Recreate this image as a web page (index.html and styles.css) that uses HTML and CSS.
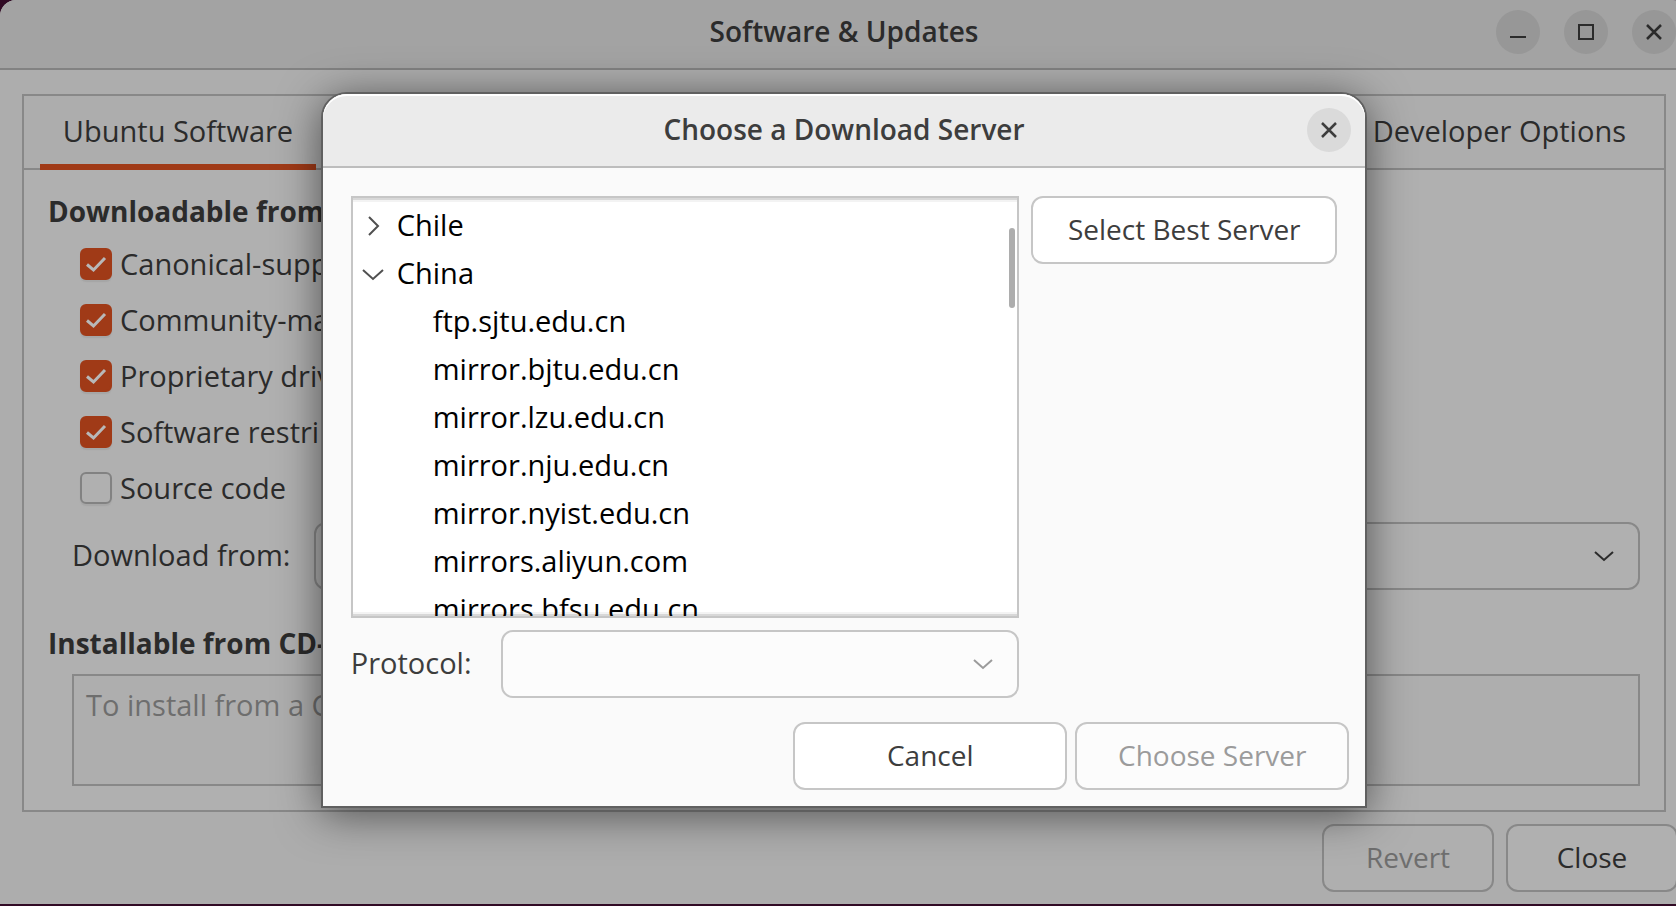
FILE: index.html
```html
<!DOCTYPE html>
<html lang="en">
<head>
<meta charset="utf-8">
<title>Software &amp; Updates</title>
<link rel="stylesheet" href="styles.css">
</head>
<body>
<main class="window">
  <header class="titlebar">
    <h1 class="title">Software &amp; Updates</h1>
    <div class="window-controls">
      <button class="round" type="button" aria-label="Minimize"><svg width="16" height="16" viewBox="0 0 16 16"><path d="M0 13H16" /></svg></button>
      <button class="round" type="button" aria-label="Maximize"><svg width="16" height="16" viewBox="0 0 16 16"><path d="M1 1H15V15H1Z" /></svg></button>
      <button class="round" type="button" aria-label="Close window"><svg class="cross" width="16" height="16" viewBox="0 0 16 16"><path d="M1 1L15 15M15 1L1 15" /></svg></button>
    </div>
  </header>

  <section class="notebook">
    <nav class="tabs">
      <button class="tab tab-active" type="button">Ubuntu Software</button>
      <button class="tab" type="button">Developer Options</button>
    </nav>
    <div class="page">
      <h2 class="heading">Downloadable from</h2>
      <div class="checks">
        <label class="check"><input type="checkbox" checked>Canonical-supp</label>
        <label class="check"><input type="checkbox" checked>Community-ma</label>
        <label class="check"><input type="checkbox" checked>Proprietary driv</label>
        <label class="check"><input type="checkbox" checked>Software restri</label>
        <label class="check"><input type="checkbox">Source code</label>
      </div>
      <div class="source">
        <label for="source">Download from:</label>
        <div class="combo">
          <select id="source"><option></option></select>
          <svg class="chevron" width="20" height="12" viewBox="0 0 20 12"><path d="M1 2L10 10L19 2" /></svg>
        </div>
      </div>
      <h2 class="heading">Installable from CD-</h2>
      <div class="media">To install from a C</div>
    </div>
  </section>

  <footer class="actions">
    <button class="button" type="button" disabled>Revert</button>
    <button class="button" type="button">Close</button>
  </footer>

  <div class="overlay">
    <section class="dialog" role="dialog" aria-labelledby="dialog-title">
      <header class="dialog-header">
        <h2 class="title" id="dialog-title">Choose a Download Server</h2>
        <button class="round" type="button" aria-label="Close dialog"><svg class="cross" width="16" height="16" viewBox="0 0 16 16"><path d="M1 1L15 15M15 1L1 15" /></svg></button>
      </header>
      <div class="dialog-body">
        <div class="chooser">
          <div class="list">
            <ul class="tree">
              <li class="row"><svg class="arrow" width="24" height="24" viewBox="0 0 24 24"><path d="M8 4L17 13L8 22" /></svg>Chile</li>
              <li class="row"><svg class="arrow" width="24" height="24" viewBox="0 0 24 24"><path d="M2 9L12 18L22 9" /></svg>China</li>
              <li class="row child">ftp.sjtu.edu.cn</li>
              <li class="row child">mirror.bjtu.edu.cn</li>
              <li class="row child">mirror.lzu.edu.cn</li>
              <li class="row child">mirror.nju.edu.cn</li>
              <li class="row child">mirror.nyist.edu.cn</li>
              <li class="row child">mirrors.aliyun.com</li>
              <li class="row child">mirrors.bfsu.edu.cn</li>
            </ul>
            <div class="thumb"></div>
          </div>
          <div class="protocol">
            <label for="protocol">Protocol:</label>
            <div class="combo">
              <select id="protocol" disabled><option></option></select>
              <svg class="chevron" width="20" height="12" viewBox="0 0 20 12"><path d="M1 2L10 10L19 2" /></svg>
            </div>
          </div>
        </div>
        <button class="button best" type="button">Select Best Server</button>
      </div>
      <footer class="dialog-actions">
        <button class="button" type="button">Cancel</button>
        <button class="button" type="button" disabled>Choose Server</button>
      </footer>
    </section>
  </div>
</main>
</body>
</html>
```

FILE: styles.css
```css
* {
  box-sizing: border-box;
}

body {
  margin: 0;
  min-height: 100vh;
  overflow: hidden;
  background: #300a24;
  font: 29px/36px "Open Sans", "Noto Sans", sans-serif;
  color: #2b2b2b;
}

h1, h2, ul {
  margin: 0;
  padding: 0;
}

button, select {
  font: inherit;
  color: inherit;
}

svg {
  display: block;
  fill: none;
  stroke: currentColor;
  stroke-width: 2;
}

/* The main window runs a little past the right edge of the screen. */
.window {
  position: relative;
  width: calc(100% + 12px);
  min-height: calc(100vh - 2px);
  display: flex;
  flex-direction: column;
  border-radius: 16px 16px 0 0;
  background: #adadad;
}

.titlebar {
  display: grid;
  grid-template-columns: 1fr auto 1fr;
  align-items: center;
  height: 70px;
  padding: 0 12px 4px;
  border-bottom: 2px solid #828282;
  border-radius: 16px 16px 0 0;
  background: #a3a3a3;
}

.title,
.heading {
  font-weight: 600;
  font-size: 28px;
}

.heading {
  font-weight: 700;
}

.title {
  grid-column: 2;
  padding-bottom: 2px;
}

.window-controls {
  display: flex;
  justify-content: flex-end;
  gap: 24px;
}

.round {
  display: grid;
  place-items: center;
  width: 44px;
  height: 44px;
  padding: 0;
  border: 0;
  border-radius: 50%;
  background: #979797;
}

.cross {
  stroke-width: 2.5;
}

.notebook {
  flex: 1;
  display: flex;
  flex-direction: column;
  margin: 24px 22px 12px;
  border: 2px solid #888;
}

.tabs {
  display: flex;
  justify-content: space-between;
  height: 74px;
  padding: 0 16px;
  border-bottom: 2px solid #888;
}

.tab {
  min-width: 276px;
  height: 74px;
  padding: 2px 22px 0;
  border: 0;
  border-bottom: 6px solid transparent;
  background: none;
}

.tab-active {
  border-color: #a03a17;
}

.page {
  flex: 1;
  padding: 23px 24px 24px;
  background: #b0b0b0;
}

.checks {
  display: grid;
  gap: 20px;
  padding: 17px 0 0 32px;
}

.check {
  display: flex;
  align-items: center;
  gap: 8px;
}

.check input {
  appearance: none;
  width: 32px;
  height: 32px;
  margin: 0;
  border: 2px solid #828282;
  border-radius: 6px;
  box-shadow: 0 2px 1px #a6a6a6;
}

.check input:checked {
  border-color: #a03a17;
  background: #a03a17 url("data:image/svg+xml,%3Csvg xmlns='http://www.w3.org/2000/svg' viewBox='0 0 28 28'%3E%3Cpath d='M5 14.5L11.5 20L23 8' fill='none' stroke='%23b8b8b8' stroke-width='3'/%3E%3C/svg%3E");
}

.source {
  display: flex;
  align-items: center;
  gap: 24px;
  padding: 16px 0 35px 24px;
}

.source label {
  min-width: 218px;
  padding-bottom: 2px;
}

.combo {
  flex: 1;
  display: grid;
  align-items: center;
}

.combo select {
  grid-area: 1 / 1;
  appearance: none;
  width: 100%;
  height: 68px;
  border: 2px solid #888;
  border-radius: 12px;
  background: none;
  opacity: 1;
}

.chevron {
  grid-area: 1 / 1;
  justify-self: end;
  margin-right: 26px;
  pointer-events: none;
}

.media {
  height: 112px;
  margin: 13px 0 0 24px;
  padding: 11px 12px;
  border: 2px solid #888;
  background: #aeaeae;
  color: #6e6e6e;
}

.button {
  height: 68px;
  min-width: 172px;
  padding: 0 24px 2px;
  border: 2px solid #888;
  border-radius: 12px;
  background: #b0b0b0;
  font-size: 28px;
}

.button:disabled {
  background: #afafaf;
  color: #6e6e6e;
}

.actions {
  display: flex;
  justify-content: flex-end;
  gap: 12px;
  padding: 0 10px 12px;
}

/* Modal dialog */
.overlay {
  position: absolute;
  inset: 0;
  display: flex;
  justify-content: center;
  align-items: flex-start;
  padding-top: 92px;
}

.dialog {
  width: 62%;
  border: 2px solid #606060;
  border-radius: 26px 26px 0 0;
  background: #fafafa;
  color: #3d3d3d;
  box-shadow: 0 6px 44px rgba(0, 0, 0, 0.55);
}

.dialog-header {
  display: grid;
  grid-template-columns: 1fr auto 1fr;
  align-items: center;
  height: 74px;
  padding: 0 14px;
  border-bottom: 2px solid #bdbdbd;
  border-radius: 24px 24px 0 0;
  background: #ebebeb;
  box-shadow: inset 0 2px #fff;
}

.dialog-header .round {
  justify-self: end;
  background: #dadada;
}

.dialog-body {
  display: flex;
  align-items: flex-start;
  gap: 12px;
  padding: 28px 28px 0;
}

.chooser {
  flex: 1;
  display: grid;
  gap: 12px;
}

.list {
  position: relative;
  height: 422px;
  overflow: hidden;
  border: 2px solid #c6c6c6;
  background: #fff;
  color: #000;
}

.list::after {
  content: "";
  position: absolute;
  inset: 0;
  box-shadow: inset 0 2px #0000001c, inset 0 4px #0000000c, inset 0 -2px #0000001c, inset 0 -4px #0000000c;
}

.tree {
  padding: 3px 8px;
  list-style: none;
}

.row {
  display: flex;
  align-items: center;
  gap: 12px;
  height: 48px;
}

.child {
  padding-left: 72px;
}

.arrow {
  color: #505050;
}

.thumb {
  position: absolute;
  top: 30px;
  right: 2px;
  width: 6px;
  height: 80px;
  border-radius: 3px;
  background: #adadad;
}

.protocol {
  display: flex;
  align-items: center;
  gap: 24px;
}

.protocol label {
  min-width: 126px;
  padding-bottom: 2px;
}

.dialog .combo select,
.dialog .button {
  border-color: #c6c6c6;
}

.dialog .combo select {
  background: #fcfcfc;
}

.protocol .chevron {
  color: #9b9b9b;
}

.dialog .button {
  background: #fff;
}

.dialog .button:disabled {
  background: #fcfcfc;
  color: #9b9b9b;
}

.best {
  min-width: 306px;
}

.dialog-actions {
  display: flex;
  justify-content: flex-end;
  gap: 8px;
  padding: 24px 16px 16px;
}

.dialog-actions .button {
  min-width: 274px;
}
```
